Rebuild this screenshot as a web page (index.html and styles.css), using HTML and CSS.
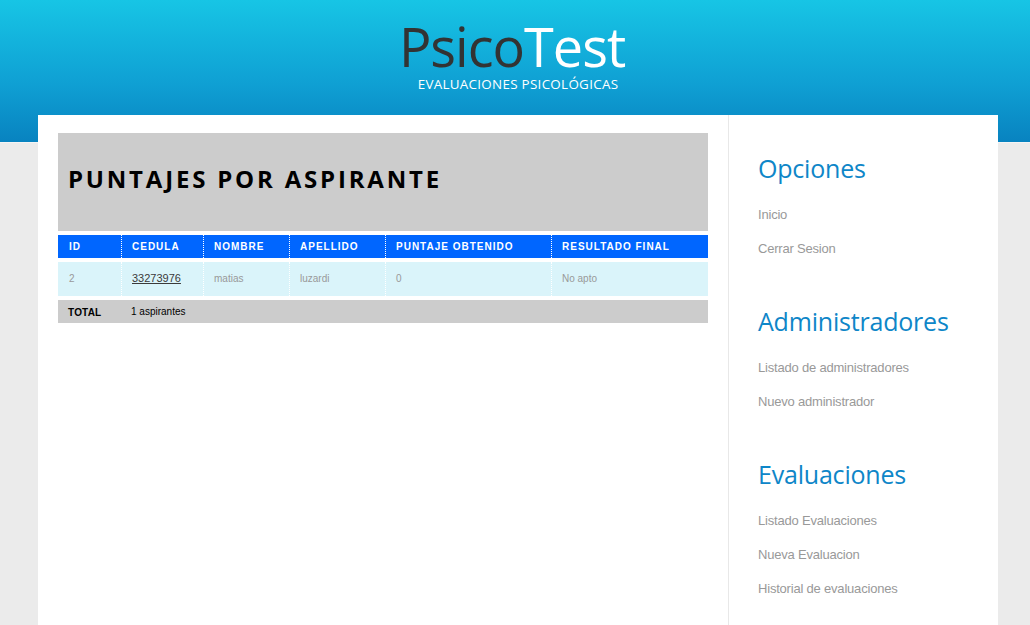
FILE: index.html
```html
<!DOCTYPE html>
<html lang="es">
<head>
<meta charset="utf-8">
<title>PsicoTest</title>
<link rel="stylesheet" href="styles.css">
</head>
<body>
<header class="site-header">
  <div class="logo"><span class="logo-dark">Psico</span><span class="logo-light">Test</span></div>
  <div class="tagline">EVALUACIONES PSICOLÓGICAS</div>
</header>
<div class="wrapper">
  <main class="main">
    <div class="title-box"><h1>PUNTAJES POR ASPIRANTE</h1></div>
    <table class="scores">
      <colgroup>
        <col class="c1"><col class="c2"><col class="c3"><col class="c4"><col class="c5"><col class="c6">
      </colgroup>
      <thead>
        <tr>
          <th>ID</th><th>CEDULA</th><th>NOMBRE</th><th>APELLIDO</th><th>PUNTAJE OBTENIDO</th><th>RESULTADO FINAL</th>
        </tr>
      </thead>
      <tbody>
        <tr>
          <td>2</td><td><a href="#" class="ced">33273976</a></td><td>matias</td><td>luzardi</td><td>0</td><td>No apto</td>
        </tr>
      </tbody>
      <tfoot>
        <tr>
          <td class="total">TOTAL</td><td colspan="5" class="count">1 aspirantes</td>
        </tr>
      </tfoot>
    </table>
  </main>
  <aside class="sidebar">
    <section class="side-section">
      <h2>Opciones</h2>
      <ul>
        <li><a href="#">Inicio</a></li>
        <li><a href="#">Cerrar Sesion</a></li>
      </ul>
    </section>
    <section class="side-section">
      <h2>Administradores</h2>
      <ul>
        <li><a href="#">Listado de administradores</a></li>
        <li><a href="#">Nuevo administrador</a></li>
      </ul>
    </section>
    <section class="side-section">
      <h2>Evaluaciones</h2>
      <ul>
        <li><a href="#">Listado Evaluaciones</a></li>
        <li><a href="#">Nueva Evaluacion</a></li>
        <li><a href="#">Historial de evaluaciones</a></li>
      </ul>
    </section>
  </aside>
</div>
</body>
</html>
```

FILE: styles.css
```css
* { box-sizing: border-box; }

body {
  margin: 0;
  background: #ebebeb;
  font-family: "Liberation Sans", Arial, sans-serif;
  overflow: hidden;
}

.site-header {
  height: 143px;
  padding-top: 19px;
  background: linear-gradient(to bottom, #17c5e5 0%, #0f9fd3 60%, #0883c0 100%);
  border-bottom: 1px solid #f4f4f4;
  text-align: center;
  font-family: "Open Sans", sans-serif;
}

.logo {
  font-size: 54px;
  line-height: 54px;
  letter-spacing: -1px;
  padding-right: 6px;
}
.logo-dark { color: #333333; }
.logo-light { color: #ffffff; }

.tagline {
  margin-top: 4px;
  padding-left: 6px;
  font-size: 13.4px;
  line-height: 14px;
  color: #ffffff;
  letter-spacing: 0.3px;
}

.wrapper {
  width: 960px;
  min-height: 510px;
  margin: -28px 0 0 calc(50% - 477px);
  background: #fff;
  display: flex;
}

.main {
  width: 690px;
  padding: 18px 20px;
}

.title-box {
  height: 98px;
  background: #cccccc;
  padding: 34px 0 0 10px;
}
.title-box h1 {
  margin: 0;
  font-family: "Open Sans", sans-serif;
  font-weight: 700;
  font-size: 24px;
  letter-spacing: 2.8px;
  color: #000;
  line-height: 24px;
}

.scores {
  width: 650px;
  table-layout: fixed;
  border-collapse: separate;
  border-spacing: 0 4px;
}
.c1 { width: 63px; }
.c2 { width: 82px; }
.c3 { width: 86px; }
.c4 { width: 96px; }
.c5 { width: 166px; }
.c6 { width: 157px; }

.scores th {
  height: 23px;
  background: #0066ff;
  color: #fff;
  font-size: 10px;
  font-weight: 700;
  letter-spacing: 1px;
  text-align: left;
  padding: 0 0 0 10px;
  border-left: 1px dotted #ffffff;
}
.scores th:first-child { border-left: 0; padding-left: 11px; }

.scores tbody td {
  height: 34px;
  background: #daf4fa;
  color: #999;
  font-size: 10px;
  padding: 0 0 2px 10px;
  border-left: 1px dotted #ffffff;
}
.scores tbody td:first-child { border-left: 0; padding-left: 11px; }

.ced {
  color: #3a3a3a;
  text-decoration: underline;
  font-size: 11px;
}

.scores tfoot td {
  height: 23px;
  background: #cccccc;
  padding: 0 0 0 10px;
  color: #000;
}
.scores tfoot .total {
  font-size: 10px;
  font-weight: 700;
  letter-spacing: 0.2px;
  padding-top: 2px;
}
.scores tfoot .count {
  font-size: 10px;
  padding-left: 10px;
  padding-bottom: 1px;
}

.sidebar {
  width: 270px;
  border-left: 1px solid #e8e8e8;
  padding: 38px 0 0 29px;
}

.side-section + .side-section { margin-top: 40px; }

.side-section h2 {
  margin: 0 0 15px;
  font-family: "Open Sans", sans-serif;
  font-weight: 400;
  font-size: 25px;
  letter-spacing: -0.2px;
  line-height: 30px;
  color: #0e86c8;
}

.side-section ul {
  list-style: none;
  margin: 0;
  padding: 0;
}
.side-section li {
  line-height: 34px;
  font-size: 13px;
  letter-spacing: -0.2px;
}
.side-section a {
  color: #999;
  text-decoration: none;
}
```
